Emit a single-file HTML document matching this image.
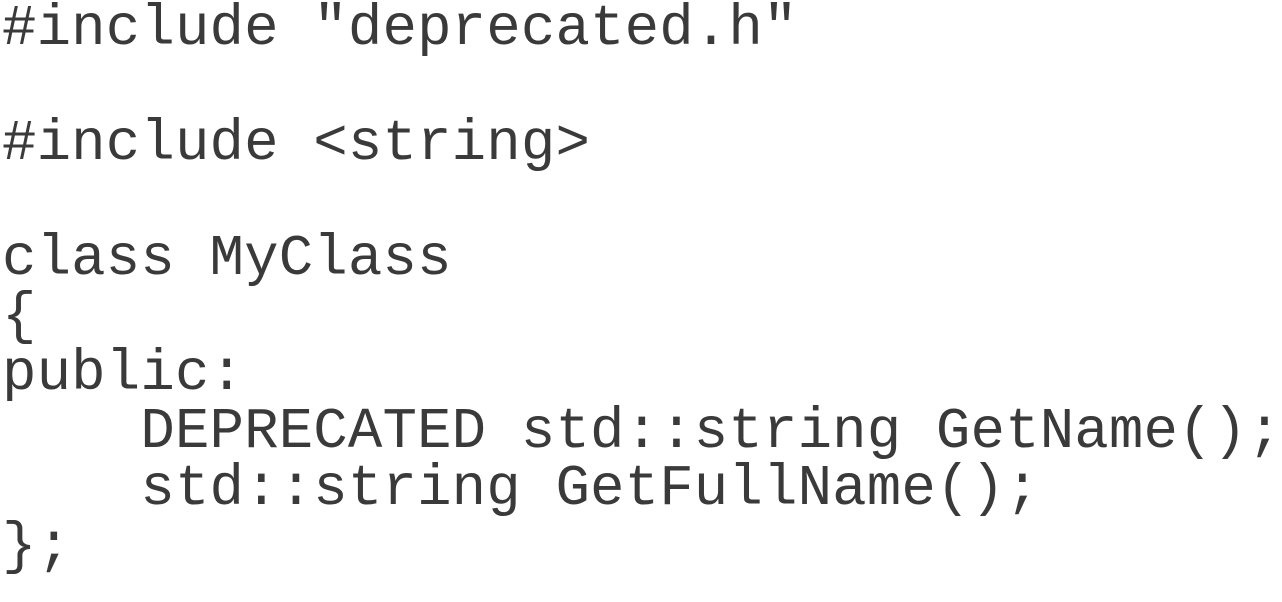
<!DOCTYPE html>
<html><head><meta charset="utf-8"><style>
html,body{margin:0;padding:0;background:#fff;width:1282px;height:602px;overflow:hidden}
pre{margin:0;position:absolute;left:2px;top:1px;font-family:"Liberation Mono",monospace;font-size:57.4px;line-height:57.5px;color:#3a3a3a;letter-spacing:0.15px}
</style></head><body>
<pre>#include "deprecated.h"

#include &lt;string&gt;

class MyClass
{
public:
    DEPRECATED std::string GetName();
    std::string GetFullName();
};</pre>
</body></html>
